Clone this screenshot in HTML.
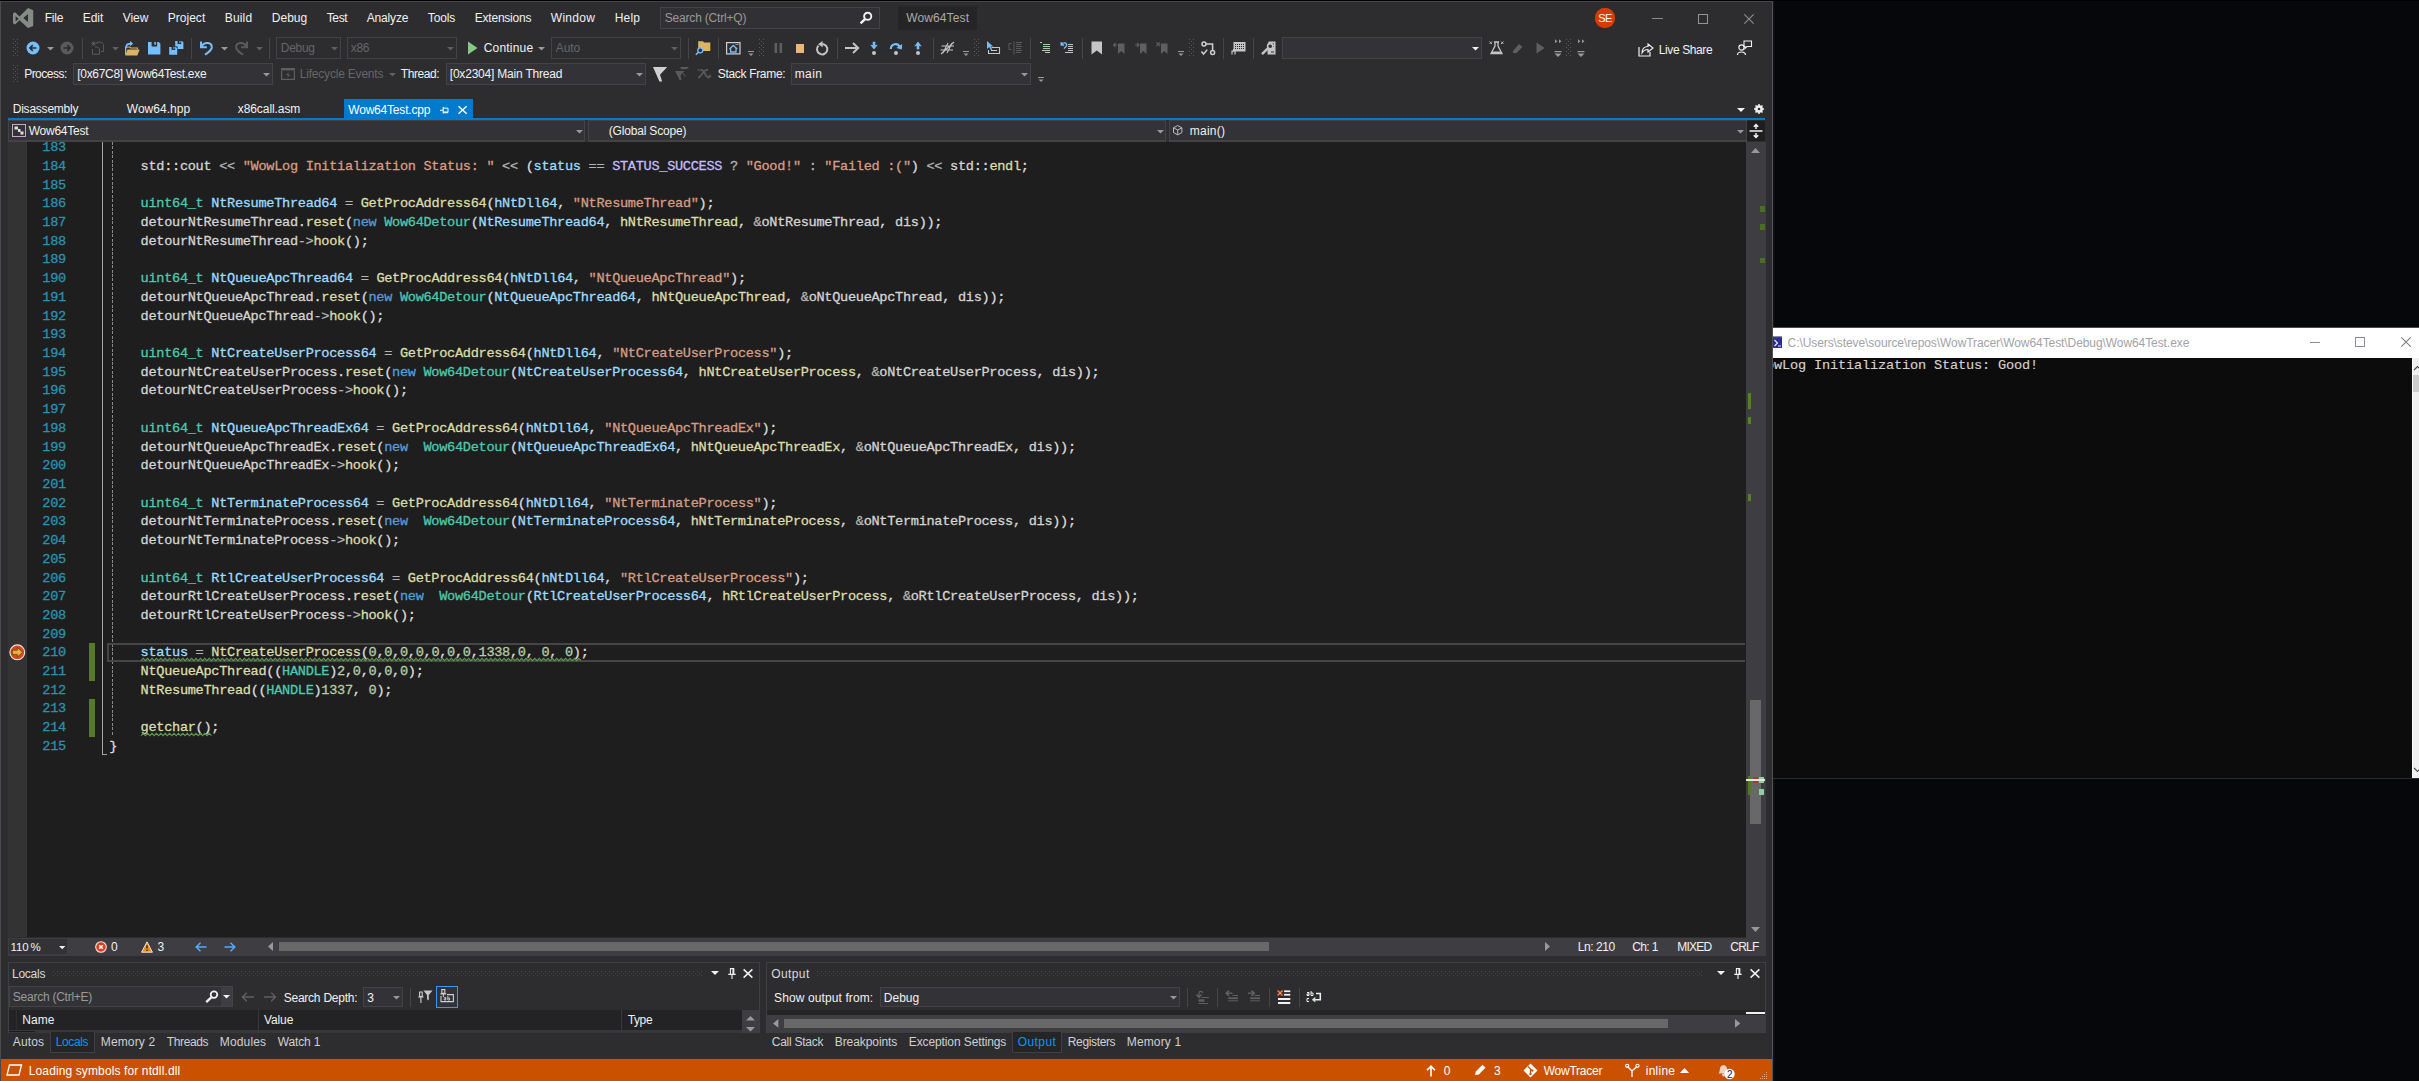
<!DOCTYPE html>
<html><head><meta charset="utf-8"><title>Wow64Test - Microsoft Visual Studio</title><style>
html,body{margin:0;padding:0;}
body{width:2419px;height:1081px;overflow:hidden;background:#06070a;position:relative;font-family:"Liberation Sans",sans-serif;}
div,span.t,svg{position:absolute;}
span.t{white-space:pre;}
svg{overflow:visible;}
.code{position:absolute;white-space:pre;font-family:"Liberation Mono",monospace;-webkit-text-stroke:0.3px;}
.code span{position:static;}
</style></head><body>
<div style="left:0px;top:1px;width:1773px;height:1080px;background:#2d2d30;"></div>
<div style="left:0px;top:1px;width:1773px;height:1px;background:#46464a;"></div>
<div style="left:0px;top:1px;width:1px;height:1080px;background:#4a4a4d;"></div>
<div style="left:1772px;top:1px;width:1px;height:1080px;background:#505054;"></div>
<div style="left:1773px;top:1px;width:2px;height:1080px;background:linear-gradient(to right,#16171a,#08090b);"></div>
<div style="left:0px;top:0px;width:2419px;height:1px;background:#000000;"></div>
<svg style="left:12.8px;top:7.9px;" width="21" height="21" viewBox="0 0 21 21"><path d="M15 0 L20.2 2.3 V17.9 L15 20.1 L6.5 12.3 L2.1 16.4 L0 15.2 V5.5 L2.1 4.3 L6.5 8.4 Z M2.6 8.2 V13.4 L5.8 10.8 Z M15 6 V13.9 L10.3 10 Z" fill="#878b85" fill-rule="evenodd"/></svg>
<span class="t" style="left:44.75px;top:10px;font-size:12px;line-height:17px;color:#f1f1f1;letter-spacing:-0.209px;">File</span>
<span class="t" style="left:82.75px;top:10px;font-size:12px;line-height:17px;color:#f1f1f1;letter-spacing:-0.044px;">Edit</span>
<span class="t" style="left:122.75px;top:10px;font-size:12px;line-height:17px;color:#f1f1f1;letter-spacing:-0.073px;">View</span>
<span class="t" style="left:167.75px;top:10px;font-size:12px;line-height:17px;color:#f1f1f1;letter-spacing:0.022px;">Project</span>
<span class="t" style="left:224.75px;top:10px;font-size:12px;line-height:17px;color:#f1f1f1;letter-spacing:0.163px;">Build</span>
<span class="t" style="left:271.75px;top:10px;font-size:12px;line-height:17px;color:#f1f1f1;letter-spacing:0.028px;">Debug</span>
<span class="t" style="left:326.75px;top:10px;font-size:12px;line-height:17px;color:#f1f1f1;letter-spacing:-0.377px;">Test</span>
<span class="t" style="left:366.75px;top:10px;font-size:12px;line-height:17px;color:#f1f1f1;letter-spacing:-0.170px;">Analyze</span>
<span class="t" style="left:427.75px;top:10px;font-size:12px;line-height:17px;color:#f1f1f1;letter-spacing:-0.103px;">Tools</span>
<span class="t" style="left:474.75px;top:10px;font-size:12px;line-height:17px;color:#f1f1f1;letter-spacing:-0.220px;">Extensions</span>
<span class="t" style="left:550.75px;top:10px;font-size:12px;line-height:17px;color:#f1f1f1;letter-spacing:0.303px;">Window</span>
<span class="t" style="left:614.75px;top:10px;font-size:12px;line-height:17px;color:#f1f1f1;letter-spacing:0.205px;">Help</span>
<div style="left:660px;top:7px;width:220px;height:22px;background:#313135;border:1px solid #434346;box-sizing:border-box;"></div>
<span class="t" style="left:664.75px;top:10px;font-size:12px;line-height:17px;color:#999999;letter-spacing:-0.190px;">Search (Ctrl+Q)</span>
<svg style="left:859px;top:10.5px;" width="14" height="14" viewBox="0 0 14 14"><circle cx="8.7" cy="5.3" r="3.6" fill="none" stroke="#f1f1f1" stroke-width="1.9"/><path d="M6.2 7.8 L1.6 12.4" stroke="#f1f1f1" stroke-width="2.4"/></svg>
<div style="left:898px;top:6px;width:79px;height:24px;background:#252527;"></div>
<span class="t" style="left:906.15px;top:10px;font-size:12px;line-height:17px;color:#aaaaaa;letter-spacing:0.133px;">Wow64Test</span>
<svg style="left:1594px;top:7px;" width="22" height="22" viewBox="0 0 22 22"><circle cx="11" cy="11" r="10.2" fill="#d83b01"/></svg>
<span class="t" style="left:1598.30px;top:11px;font-size:11px;line-height:15px;color:#ffffff;letter-spacing:-0.737px;">SE</span>
<div style="left:1652px;top:18px;width:11px;height:1px;background:#8a8a8a;"></div>
<div style="left:1698px;top:14px;width:10px;height:10px;border:1px solid #96968e;box-sizing:border-box;"></div>
<svg style="left:1744px;top:14px;" width="10" height="10" viewBox="0 0 10 10"><path d="M0.3 0.3 L9.7 9.7 M9.7 0.3 L0.3 9.7" stroke="#8f8f8f" stroke-width="1.1"/></svg>
<svg style="left:13px;top:39px;" width="6" height="18" viewBox="0 0 6 18"><g fill="#5a5a5e"><rect x="0" y="0" width="1" height="1"/><rect x="4" y="0" width="1" height="1"/><rect x="2" y="2" width="1" height="1"/><rect x="0" y="4" width="1" height="1"/><rect x="4" y="4" width="1" height="1"/><rect x="2" y="6" width="1" height="1"/><rect x="0" y="8" width="1" height="1"/><rect x="4" y="8" width="1" height="1"/><rect x="2" y="10" width="1" height="1"/><rect x="0" y="12" width="1" height="1"/><rect x="4" y="12" width="1" height="1"/><rect x="2" y="14" width="1" height="1"/><rect x="0" y="16" width="1" height="1"/><rect x="4" y="16" width="1" height="1"/></g></svg>
<svg style="left:26px;top:41px;" width="14" height="14" viewBox="0 0 14 14"><circle cx="7" cy="7" r="6.5" fill="#75beff"/><path d="M10.5 7H4.2 M6.8 4.2 L4 7 L6.8 9.8" stroke="#2d2d30" stroke-width="1.7" fill="none"/></svg>
<svg style="left:47px;top:47px;" width="7" height="3.5" viewBox="0 0 7 3.5"><path d="M0 0H7L3.5 3.5Z" fill="#999999"/></svg>
<svg style="left:60px;top:41px;" width="14" height="14" viewBox="0 0 14 14"><circle cx="7" cy="7" r="6.5" fill="#5a5a5d"/><path d="M3.5 7H9.8 M7.2 4.2 L10 7 L7.2 9.8" stroke="#2d2d30" stroke-width="1.7" fill="none"/></svg>
<div style="left:82px;top:38px;width:1px;height:21px;background:#46464a;"></div>
<svg style="left:91px;top:41px;" width="14" height="14" viewBox="0 0 14 14"><path d="M6 3V1.2H10.2L12.6 3.6V10.4H10" fill="none" stroke="#5a5a5d" stroke-width="1"/><path d="M1.5 8V13.2H8.5V8L6.6 6H4" fill="none" stroke="#5a5a5d" stroke-width="1"/><path d="M2.6 0V5.2M0 2.6H5.2M0.8 0.8L4.4 4.4M4.4 0.8L0.8 4.4" stroke="#5a5a5d" stroke-width="0.8"/></svg>
<svg style="left:112px;top:47px;" width="7" height="3.5" viewBox="0 0 7 3.5"><path d="M0 0H7L3.5 3.5Z" fill="#5f5f62"/></svg>
<svg style="left:124.6px;top:40.6px;" width="15" height="15" viewBox="0 0 15 15"><path d="M0.6 13.8 V6 H4.6 L5.6 7 H12.4 V8.2" fill="none" stroke="#dcb464" stroke-width="1.2"/><path d="M2.4 8.4H14.6L12.4 14.6H0.4Z" fill="#dcb464"/><path d="M1.4 7.2 V5 C1.4 3 3.4 2.6 6.6 2.6" fill="none" stroke="#75beff" stroke-width="1.6"/><path d="M5 0L8.2 2.6L5 5.2Z" fill="#75beff"/></svg>
<svg style="left:147.7px;top:41.7px;" width="13" height="13" viewBox="0 0 13 13"><path d="M0 0H10.6L12.4 1.8V12.4H0Z" fill="#75beff"/><rect x="3.6" y="0" width="5.5" height="4.5" fill="#2d2d30"/><rect x="6.3" y="0" width="1.6" height="2.8" fill="#75beff"/></svg>
<svg style="left:168.8px;top:41px;" width="15" height="14" viewBox="0 0 15 14"><path d="M6.2 0H13L14.4 1.4V8H6.2Z" fill="#75beff"/><rect x="8.6" y="0" width="3.6" height="3" fill="#2d2d30"/><rect x="10.4" y="0" width="1.1" height="1.9" fill="#75beff"/><path d="M-0.4 5.4H8.6V14.2H-0.4Z" fill="#2d2d30"/><path d="M0.2 5.9H6.9L8.2 7.2V13.8H0.2Z" fill="#75beff"/><rect x="2.6" y="5.9" width="3.6" height="3" fill="#2d2d30"/><rect x="4.4" y="5.9" width="1.1" height="1.9" fill="#75beff"/></svg>
<div style="left:191px;top:38px;width:1px;height:21px;background:#46464a;"></div>
<svg style="left:199.6px;top:41px;" width="13" height="14" viewBox="0 0 13 14"><path d="M1 0.4V6.2H6.8" fill="none" stroke="#75beff" stroke-width="2"/><path d="M1.6 5.6C4 0.6 12 1 11.8 6.4C11.6 9.6 8 11.4 5 13.8" fill="none" stroke="#75beff" stroke-width="2"/></svg>
<svg style="left:221px;top:47px;" width="7" height="3.5" viewBox="0 0 7 3.5"><path d="M0 0H7L3.5 3.5Z" fill="#999999"/></svg>
<svg style="left:234.6px;top:41px;" width="13" height="14" viewBox="0 0 13 14"><path d="M12 0.4V6.2H6.2" fill="none" stroke="#5a5a5d" stroke-width="2"/><path d="M11.4 5.6C9 0.6 1 1 1.2 6.4C1.4 9.6 5 11.4 8 13.8" fill="none" stroke="#5a5a5d" stroke-width="2"/></svg>
<svg style="left:256px;top:47px;" width="7" height="3.5" viewBox="0 0 7 3.5"><path d="M0 0H7L3.5 3.5Z" fill="#5f5f62"/></svg>
<div style="left:269px;top:38px;width:1px;height:21px;background:#46464a;"></div>
<div style="left:276px;top:37px;width:65px;height:22px;background:#2d2d30;border:1px solid #434346;box-sizing:border-box;"></div>
<span class="t" style="left:280.75px;top:40px;font-size:12px;line-height:17px;color:#656568;letter-spacing:-0.272px;">Debug</span>
<svg style="left:331px;top:47px;" width="7" height="3.5" viewBox="0 0 7 3.5"><path d="M0 0H7L3.5 3.5Z" fill="#5f5f62"/></svg>
<div style="left:347px;top:37px;width:110px;height:22px;background:#2d2d30;border:1px solid #434346;box-sizing:border-box;"></div>
<span class="t" style="left:350.75px;top:40px;font-size:12px;line-height:17px;color:#656568;letter-spacing:-0.283px;">x86</span>
<svg style="left:447px;top:47px;" width="7" height="3.5" viewBox="0 0 7 3.5"><path d="M0 0H7L3.5 3.5Z" fill="#5f5f62"/></svg>
<svg style="left:467px;top:41px;" width="11" height="14" viewBox="0 0 11 14"><path d="M1 0.5 L10.5 7 L1 13.5Z" fill="#86c886"/></svg>
<span class="t" style="left:483.75px;top:40px;font-size:12px;line-height:17px;color:#f1f1f1;letter-spacing:0.183px;">Continue</span>
<svg style="left:538px;top:47px;" width="7" height="3.5" viewBox="0 0 7 3.5"><path d="M0 0H7L3.5 3.5Z" fill="#999999"/></svg>
<div style="left:551px;top:37px;width:130px;height:22px;background:#2d2d30;border:1px solid #434346;box-sizing:border-box;"></div>
<span class="t" style="left:555.75px;top:40px;font-size:12px;line-height:17px;color:#656568;letter-spacing:-0.046px;">Auto</span>
<svg style="left:671px;top:47px;" width="7" height="3.5" viewBox="0 0 7 3.5"><path d="M0 0H7L3.5 3.5Z" fill="#5f5f62"/></svg>
<div style="left:688px;top:38px;width:1px;height:21px;background:#46464a;"></div>
<svg style="left:695px;top:40px;" width="16" height="16" viewBox="0 0 16 16"><path d="M3.2 1.2H8L9 2.6H15.3V11H3.2Z" fill="#dcb464"/><circle cx="5.3" cy="10.3" r="2.5" fill="#2d2d30" stroke="#75beff" stroke-width="1.3"/><path d="M3.4 12.2 L0.8 14.8" stroke="#75beff" stroke-width="1.6"/></svg>
<div style="left:718px;top:38px;width:1px;height:21px;background:#46464a;"></div>
<svg style="left:726px;top:42px;" width="15" height="13" viewBox="0 0 15 13"><rect x="0.6" y="0.6" width="13.4" height="11.3" fill="none" stroke="#d0d0d0" stroke-width="1.2"/><path d="M3.4 7 L7.3 3.4 L11.2 7 M4.6 6.4V10H10V6.4" fill="none" stroke="#75beff" stroke-width="1.3"/><rect x="9.6" y="2" width="1" height="1" fill="#d0d0d0"/><rect x="11.4" y="2" width="1" height="1" fill="#d0d0d0"/></svg>
<svg style="left:748px;top:51px;" width="7" height="6" viewBox="0 0 7 6"><rect x="0" y="0" width="6" height="1" fill="#999"/><path d="M0.5 2.5H5.5L3 5Z" fill="#999"/></svg>
<svg style="left:759px;top:39px;" width="6" height="18" viewBox="0 0 6 18"><g fill="#5a5a5e"><rect x="0" y="0" width="1" height="1"/><rect x="4" y="0" width="1" height="1"/><rect x="2" y="2" width="1" height="1"/><rect x="0" y="4" width="1" height="1"/><rect x="4" y="4" width="1" height="1"/><rect x="2" y="6" width="1" height="1"/><rect x="0" y="8" width="1" height="1"/><rect x="4" y="8" width="1" height="1"/><rect x="2" y="10" width="1" height="1"/><rect x="0" y="12" width="1" height="1"/><rect x="4" y="12" width="1" height="1"/><rect x="2" y="14" width="1" height="1"/><rect x="0" y="16" width="1" height="1"/><rect x="4" y="16" width="1" height="1"/></g></svg>
<svg style="left:774px;top:43px;" width="9" height="10" viewBox="0 0 9 10"><rect x="0.5" y="0" width="2.6" height="10" fill="#5f5f62"/><rect x="5.5" y="0" width="2.6" height="10" fill="#5f5f62"/></svg>
<div style="left:796px;top:44px;width:8.2px;height:8.5px;background:#eab67a;"></div>
<svg style="left:815px;top:41px;" width="14" height="15" viewBox="0 0 14 15"><path d="M3.4 4.6 A5.2 5.2 0 1 0 7.2 3" fill="none" stroke="#c5c5c5" stroke-width="2"/><path d="M7.6 0 L3 3.2 L7.6 6.2Z" fill="#c5c5c5"/></svg>
<div style="left:837px;top:38px;width:1px;height:21px;background:#46464a;"></div>
<svg style="left:845px;top:42px;" width="15" height="12" viewBox="0 0 15 12"><path d="M0 6H13 M8 1 L13.2 6 L8 11" fill="none" stroke="#c5c5c5" stroke-width="1.9"/></svg>
<svg style="left:870px;top:41px;" width="8" height="15" viewBox="0 0 8 15"><path d="M4 0.8V5" stroke="#75beff" stroke-width="2.6"/><path d="M0.2 3.8L4 8.6L7.8 3.8L4 4.6Z" fill="#75beff"/><circle cx="4" cy="12" r="2" fill="#c5c5c5"/></svg>
<svg style="left:889px;top:41px;" width="14" height="15" viewBox="0 0 14 15"><path d="M1.8 8 C2 2.6 8.6 1.4 10.4 5.6" fill="none" stroke="#75beff" stroke-width="2.2"/><path d="M13.2 3 L12.8 8.6 L7.4 7Z" fill="#75beff"/><circle cx="7" cy="12" r="2" fill="#c5c5c5"/></svg>
<svg style="left:914px;top:41px;" width="8" height="15" viewBox="0 0 8 15"><path d="M4 8.4V4" stroke="#75beff" stroke-width="2.6"/><path d="M0.2 5.4L4 0.6L7.8 5.4L4 4.6Z" fill="#75beff"/><circle cx="4" cy="12" r="2" fill="#c5c5c5"/></svg>
<div style="left:933px;top:38px;width:1px;height:21px;background:#46464a;"></div>
<svg style="left:940px;top:41px;" width="16" height="14" viewBox="0 0 16 14"><path d="M3 12 L8 2 M7 12 L12 2 M1.5 5H14 M0.5 9H13 M1 13 L14 1" fill="none" stroke="#c5c5c5" stroke-width="1.1"/></svg>
<svg style="left:963px;top:51px;" width="7" height="6" viewBox="0 0 7 6"><rect x="0" y="0" width="6" height="1" fill="#999"/><path d="M0.5 2.5H5.5L3 5Z" fill="#999"/></svg>
<svg style="left:974px;top:39px;" width="6" height="18" viewBox="0 0 6 18"><g fill="#5a5a5e"><rect x="0" y="0" width="1" height="1"/><rect x="4" y="0" width="1" height="1"/><rect x="2" y="2" width="1" height="1"/><rect x="0" y="4" width="1" height="1"/><rect x="4" y="4" width="1" height="1"/><rect x="2" y="6" width="1" height="1"/><rect x="0" y="8" width="1" height="1"/><rect x="4" y="8" width="1" height="1"/><rect x="2" y="10" width="1" height="1"/><rect x="0" y="12" width="1" height="1"/><rect x="4" y="12" width="1" height="1"/><rect x="2" y="14" width="1" height="1"/><rect x="0" y="16" width="1" height="1"/><rect x="4" y="16" width="1" height="1"/></g></svg>
<svg style="left:986px;top:41px;" width="15" height="14" viewBox="0 0 15 14"><path d="M1 0 L1 8 L3.2 6 L5 9.2 L6.2 8.6 L4.5 5.6 L7.2 5.4Z" fill="#75beff"/><path d="M5.5 6.5H13.5V12.5H2.5V9 M5 9.5H11" fill="none" stroke="#c5c5c5" stroke-width="1.1"/></svg>
<svg style="left:1008px;top:41px;" width="15" height="14" viewBox="0 0 15 14"><path d="M3.5 2.5H1V8.5H3.5 M6 0.5V13.5" fill="none" stroke="#5a5a5d" stroke-width="1"/><path d="M8 1.5H14 M8 3.5H13 M8 5.5H14 M8 7.5H13 M8 9.5H14 M8 11.5H13" stroke="#5a5a5d" stroke-width="1"/></svg>
<div style="left:1030px;top:38px;width:1px;height:21px;background:#46464a;"></div>
<svg style="left:1040px;top:42px;" width="11" height="11" viewBox="0 0 11 11"><path d="M0 0.5H2" stroke="#c5c5c5" stroke-width="1"/><path d="M3 2.5H10 M3 4.5H10 M3 6.5H10" stroke="#9fcf9f" stroke-width="1"/><path d="M2 8.5H10 M5 10.5H10" stroke="#c5c5c5" stroke-width="1"/></svg>
<svg style="left:1060px;top:41px;" width="15" height="14" viewBox="0 0 15 14"><path d="M8 3.5H13 M8 5.5H13 M8 7.5H13 M8 9.5H13 M5 11.5H13" stroke="#c5c5c5" stroke-width="1"/><path d="M1.2 1 V4 H4.2 M1.6 3.6 C3 1 7 1.6 6.6 4.4 C6.4 6 5 6.4 4 7.6" fill="none" stroke="#75beff" stroke-width="1.3"/></svg>
<div style="left:1082px;top:38px;width:1px;height:21px;background:#46464a;"></div>
<svg style="left:1091px;top:41px;" width="12" height="14" viewBox="0 0 12 14"><path d="M0.5 0.5H11V13.5L5.8 9.5L0.5 13.5Z" fill="#c5c5c5"/></svg>
<svg style="left:1113px;top:41px;" width="13" height="14" viewBox="0 0 13 14"><path d="M5 2.5H11.5V13L8.2 10L5 13Z" fill="#5f5f62"/><path d="M4.5 4H0.5 M2.5 2L0.5 4L2.5 6" fill="none" stroke="#5f5f62" stroke-width="1.1"/></svg>
<svg style="left:1135px;top:41px;" width="13" height="14" viewBox="0 0 13 14"><path d="M5 2.5H11.5V13L8.2 10L5 13Z" fill="#5f5f62"/><path d="M0 4H4 M2 2L4 4L2 6" fill="none" stroke="#5f5f62" stroke-width="1.1"/></svg>
<svg style="left:1156px;top:41px;" width="13" height="14" viewBox="0 0 13 14"><path d="M5 2.5H11.5V13L8.2 10L5 13Z" fill="#5f5f62"/><path d="M0.5 1.5L4 5 M4 1.5L0.5 5" fill="none" stroke="#5f5f62" stroke-width="1.1"/></svg>
<svg style="left:1178px;top:51px;" width="7" height="6" viewBox="0 0 7 6"><rect x="0" y="0" width="6" height="1" fill="#999"/><path d="M0.5 2.5H5.5L3 5Z" fill="#999"/></svg>
<svg style="left:1189px;top:39px;" width="6" height="18" viewBox="0 0 6 18"><g fill="#5a5a5e"><rect x="0" y="0" width="1" height="1"/><rect x="4" y="0" width="1" height="1"/><rect x="2" y="2" width="1" height="1"/><rect x="0" y="4" width="1" height="1"/><rect x="4" y="4" width="1" height="1"/><rect x="2" y="6" width="1" height="1"/><rect x="0" y="8" width="1" height="1"/><rect x="4" y="8" width="1" height="1"/><rect x="2" y="10" width="1" height="1"/><rect x="0" y="12" width="1" height="1"/><rect x="4" y="12" width="1" height="1"/><rect x="2" y="14" width="1" height="1"/><rect x="0" y="16" width="1" height="1"/><rect x="4" y="16" width="1" height="1"/></g></svg>
<svg style="left:1201px;top:41px;" width="15" height="15" viewBox="0 0 15 15"><circle cx="3" cy="3" r="2" fill="none" stroke="#d0d0d0" stroke-width="1.5"/><circle cx="11.6" cy="11.4" r="2" fill="none" stroke="#d0d0d0" stroke-width="1.5"/><path d="M5 3H11.6V9.4" fill="none" stroke="#d0d0d0" stroke-width="1.5"/><path d="M0.4 10.6L2.6 13L6.2 8.6" fill="none" stroke="#d0d0d0" stroke-width="1.5"/></svg>
<div style="left:1223px;top:38px;width:1px;height:21px;background:#46464a;"></div>
<svg style="left:1231px;top:41px;" width="15" height="14" viewBox="0 0 15 14"><rect x="2.5" y="1" width="12" height="9.5" fill="#c5c5c5"/><path d="M4 3.5H13 M4 5.5H13 M4 7.5H13" stroke="#2d2d30" stroke-width="1" stroke-dasharray="1 1"/><path d="M1 13.5V10.2H4V13.5 M2.5 9.4V8" stroke="#c5c5c5" stroke-width="1.2" fill="none"/></svg>
<div style="left:1253px;top:38px;width:1px;height:21px;background:#46464a;"></div>
<svg style="left:1261px;top:41px;" width="15" height="14" viewBox="0 0 15 14"><path d="M7.5 0.5H14.5V13.5H6.5V10" fill="#c5c5c5"/><path d="M9 3H13M9 5.5H13M10 11H13" stroke="#2d2d30" stroke-width="1"/><path d="M1 13.2L7.6 6.6" stroke="#c5c5c5" stroke-width="2.4"/><circle cx="9.2" cy="5.2" r="2.6" fill="#2d2d30" stroke="#c5c5c5" stroke-width="1.6"/></svg>
<div style="left:1282px;top:37px;width:200px;height:22px;background:#333337;border:1px solid #434346;box-sizing:border-box;"></div>
<svg style="left:1472px;top:47px;" width="7" height="3.5" viewBox="0 0 7 3.5"><path d="M0 0H7L3.5 3.5Z" fill="#f1f1f1"/></svg>
<svg style="left:1489px;top:41px;" width="15" height="14" viewBox="0 0 15 14"><path d="M5 1H10 M6 1V5L2 12.5H13L9 5V1" fill="none" stroke="#c5c5c5" stroke-width="1.3"/><path d="M3.5 10.5H11.5L12.5 12.5H2.5Z" fill="#c5c5c5"/><path d="M0.5 0.5L3 3M3 0.5L0.5 3 M12 0.5L14.5 3M14.5 0.5L12 3" stroke="#c5c5c5" stroke-width="0.9"/></svg>
<svg style="left:1512px;top:43px;" width="12" height="10" viewBox="0 0 12 10"><path d="M1 8 L7 1 L10.5 4 L4.5 10 H1Z" fill="#5f5f62"/></svg>
<svg style="left:1536px;top:42px;" width="9" height="12" viewBox="0 0 9 12"><path d="M0.5 0.5 L8.5 6 L0.5 11.5Z" fill="#5f5f62"/></svg>
<svg style="left:1554px;top:39px;" width="9" height="19" viewBox="0 0 9 19"><path d="M1 0.3L3.4 2.3L1 4.3Z M5 0.3L7.4 2.3L5 4.3Z" fill="#999"/><rect x="0.5" y="12" width="7" height="1.2" fill="#999"/><path d="M0.5 14.6H7.5L4 18Z" fill="#999"/></svg>
<svg style="left:1566px;top:39px;" width="6" height="18" viewBox="0 0 6 18"><g fill="#5a5a5e"><rect x="0" y="0" width="1" height="1"/><rect x="4" y="0" width="1" height="1"/><rect x="2" y="2" width="1" height="1"/><rect x="0" y="4" width="1" height="1"/><rect x="4" y="4" width="1" height="1"/><rect x="2" y="6" width="1" height="1"/><rect x="0" y="8" width="1" height="1"/><rect x="4" y="8" width="1" height="1"/><rect x="2" y="10" width="1" height="1"/><rect x="0" y="12" width="1" height="1"/><rect x="4" y="12" width="1" height="1"/><rect x="2" y="14" width="1" height="1"/><rect x="0" y="16" width="1" height="1"/><rect x="4" y="16" width="1" height="1"/></g></svg>
<svg style="left:1577px;top:39px;" width="9" height="19" viewBox="0 0 9 19"><path d="M1 0.3L3.4 2.3L1 4.3Z M5 0.3L7.4 2.3L5 4.3Z" fill="#999"/><rect x="0.5" y="12" width="7" height="1.2" fill="#999"/><path d="M0.5 14.6H7.5L4 18Z" fill="#999"/></svg>
<svg style="left:1638px;top:42px;" width="16" height="15" viewBox="0 0 16 15"><path d="M1 5V14H12V10" fill="none" stroke="#f1f1f1" stroke-width="1.2"/><path d="M4 11 C4 6 7 4.5 10 4.5 V2 L15 6 L10 10 V7.5 C7 7.5 5.5 8.5 4 11Z" fill="none" stroke="#f1f1f1" stroke-width="1.1"/></svg>
<span class="t" style="left:1658.75px;top:42px;font-size:12px;line-height:17px;color:#f1f1f1;letter-spacing:-0.387px;">Live Share</span>
<svg style="left:1737px;top:40px;" width="16" height="16" viewBox="0 0 16 16"><circle cx="4.5" cy="7.5" r="2.6" fill="none" stroke="#f1f1f1" stroke-width="1.2"/><path d="M0.5 15 C0.5 11 8.5 11 8.5 15" fill="none" stroke="#f1f1f1" stroke-width="1.2"/><path d="M7 1H14.5V6.5H10L8 8.5V6.5H7Z" fill="none" stroke="#f1f1f1" stroke-width="1.1"/></svg>
<svg style="left:13px;top:65px;" width="6" height="17" viewBox="0 0 6 17"><g fill="#5a5a5e"><rect x="0" y="0" width="1" height="1"/><rect x="4" y="0" width="1" height="1"/><rect x="2" y="2" width="1" height="1"/><rect x="0" y="4" width="1" height="1"/><rect x="4" y="4" width="1" height="1"/><rect x="2" y="6" width="1" height="1"/><rect x="0" y="8" width="1" height="1"/><rect x="4" y="8" width="1" height="1"/><rect x="2" y="10" width="1" height="1"/><rect x="0" y="12" width="1" height="1"/><rect x="4" y="12" width="1" height="1"/><rect x="2" y="14" width="1" height="1"/><rect x="0" y="16" width="1" height="1"/><rect x="4" y="16" width="1" height="1"/></g></svg>
<span class="t" style="left:24.15px;top:66px;font-size:12px;line-height:17px;color:#f1f1f1;letter-spacing:-0.510px;">Process:</span>
<div style="left:73px;top:63px;width:200px;height:22px;background:#333337;border:1px solid #434346;box-sizing:border-box;"></div>
<span class="t" style="left:77.25px;top:66px;font-size:12px;line-height:17px;color:#f1f1f1;letter-spacing:-0.311px;">[0x67C8] Wow64Test.exe</span>
<svg style="left:263px;top:73px;" width="7" height="3.5" viewBox="0 0 7 3.5"><path d="M0 0H7L3.5 3.5Z" fill="#999999"/></svg>
<svg style="left:281px;top:68px;" width="14" height="12" viewBox="0 0 14 12"><path d="M0.6 2.5V11.4H13.4V2.5" fill="none" stroke="#5f5f62" stroke-width="1.2"/><rect x="0" y="0" width="14" height="2.4" fill="#5f5f62"/><path d="M8 3.8L5 7.2H7.4L6 10.2L9.4 6.4H7Z" fill="#5f5f62"/></svg>
<span class="t" style="left:299.75px;top:66px;font-size:12px;line-height:17px;color:#656568;letter-spacing:-0.200px;">Lifecycle Events</span>
<svg style="left:389px;top:73px;" width="7" height="3.5" viewBox="0 0 7 3.5"><path d="M0 0H7L3.5 3.5Z" fill="#5f5f62"/></svg>
<span class="t" style="left:400.75px;top:66px;font-size:12px;line-height:17px;color:#f1f1f1;letter-spacing:-0.408px;">Thread:</span>
<div style="left:446px;top:63px;width:200px;height:22px;background:#333337;border:1px solid #434346;box-sizing:border-box;"></div>
<span class="t" style="left:449.75px;top:66px;font-size:12px;line-height:17px;color:#f1f1f1;letter-spacing:-0.201px;">[0x2304] Main Thread</span>
<svg style="left:636px;top:73px;" width="7" height="3.5" viewBox="0 0 7 3.5"><path d="M0 0H7L3.5 3.5Z" fill="#999999"/></svg>
<svg style="left:653px;top:66.6px;" width="15" height="15" viewBox="0 0 15 15"><path d="M0 0H14.2L7 7.8L9.2 14.6H6.4Z" fill="#d0d0d0"/></svg>
<svg style="left:675px;top:67px;" width="15" height="14" viewBox="0 0 15 14"><path d="M5 0H14L11.6 2.2H6.4Z" fill="#5a5a5d"/><path d="M0 4H9.4L5.4 8.4L6.6 13H4.6Z" fill="#5a5a5d"/><path d="M8.2 6.4L9 8L10.8 9.4" fill="none" stroke="#5a5a5d" stroke-width="1"/></svg>
<svg style="left:697px;top:68px;" width="15" height="12" viewBox="0 0 15 12"><path d="M1 9.6C3 9.6 4 7.4 5.4 5.4C6.8 3.4 8.6 1.6 11 1.6 M3.4 1.6C5.6 1.6 6.6 3 7.6 5 C8.6 7 9.6 9.6 12 9.6" fill="none" stroke="#5a5a5d" stroke-width="1.7"/><path d="M0.6 1.2L2.6 3.2 M12.8 6.6V10M11.2 8.4H14.4" stroke="#5a5a5d" stroke-width="1.1"/></svg>
<span class="t" style="left:717.75px;top:66px;font-size:12px;line-height:17px;color:#f1f1f1;letter-spacing:-0.321px;">Stack Frame:</span>
<div style="left:791px;top:63px;width:240px;height:22px;background:#333337;border:1px solid #434346;box-sizing:border-box;"></div>
<span class="t" style="left:794.75px;top:66px;font-size:12px;line-height:17px;color:#f1f1f1;letter-spacing:0.372px;">main</span>
<svg style="left:1021px;top:73px;" width="7" height="3.5" viewBox="0 0 7 3.5"><path d="M0 0H7L3.5 3.5Z" fill="#999999"/></svg>
<svg style="left:1038px;top:77px;" width="7" height="7" viewBox="0 0 7 7"><rect x="0" y="0" width="6" height="1" fill="#999"/><path d="M0.5 2.5H5.5L3 5Z" fill="#999"/></svg>
<span class="t" style="left:12.75px;top:101px;font-size:12px;line-height:17px;color:#f1f1f1;letter-spacing:-0.229px;">Disassembly</span>
<span class="t" style="left:126.75px;top:101px;font-size:12px;line-height:17px;color:#f1f1f1;letter-spacing:0.039px;">Wow64.hpp</span>
<span class="t" style="left:237.75px;top:101px;font-size:12px;line-height:17px;color:#f1f1f1;letter-spacing:-0.078px;">x86call.asm</span>
<div style="left:344px;top:99px;width:129px;height:20px;background:#007acc;"></div>
<span class="t" style="left:348.25px;top:102px;font-size:12px;line-height:17px;color:#ffffff;letter-spacing:-0.199px;">Wow64Test.cpp</span>
<svg style="left:439.8px;top:107px;" width="9" height="7" viewBox="0 0 9 7"><path d="M0 3.3H3 M3.2 0V6.6 M3.2 1.2H8V5H3.2 M3.2 5.7H8.3" fill="none" stroke="#ffffff" stroke-width="1"/></svg>
<svg style="left:458.4px;top:106.3px;" width="9.2" height="8" viewBox="0 0 9.2 8"><path d="M0.5 0.3L8.7 7.7M8.7 0.3L0.5 7.7" stroke="#ffffff" stroke-width="1.4"/></svg>
<svg style="left:1737px;top:108px;" width="8" height="4.0" viewBox="0 0 8 4.0"><path d="M0 0H8L4.0 4.0Z" fill="#f1f1f1"/></svg>
<svg style="left:1754px;top:103.5px;" width="10" height="10" viewBox="0 0 10 10"><circle cx="5" cy="5" r="2.9" fill="none" stroke="#f1f1f1" stroke-width="1.9"/><path d="M5 0V10M0 5H10M1.5 1.5L8.5 8.5M8.5 1.5L1.5 8.5" stroke="#f1f1f1" stroke-width="1.5"/><circle cx="5" cy="5" r="1.3" fill="#2d2d30"/></svg>
<div style="left:8px;top:118px;width:1757px;height:2px;background:#007acc;"></div>
<div style="left:8px;top:120px;width:1739px;height:22px;background:#434346;"></div>
<div style="left:9px;top:121px;width:575px;height:19px;background:#333337;"></div>
<div style="left:585px;top:120px;width:3px;height:22px;background:#2f2f32;"></div>
<div style="left:589px;top:121px;width:576px;height:19px;background:#333337;"></div>
<div style="left:1166px;top:120px;width:3px;height:22px;background:#2f2f32;"></div>
<div style="left:1170px;top:121px;width:576px;height:19px;background:#333337;"></div>
<svg style="left:12px;top:124px;" width="14" height="13" viewBox="0 0 14 13"><rect x="0.5" y="0.5" width="13" height="12" fill="none" stroke="#c8a6c8" stroke-width="1"/><path d="M2.5 2.5H6V5H8.5V7.5H11.5V10.5H8.5V8H6V5.5H2.5Z M4 1.5V6 " fill="#e0e0e0"/></svg>
<span class="t" style="left:28.75px;top:123px;font-size:12px;line-height:17px;color:#f1f1f1;letter-spacing:-0.256px;">Wow64Test</span>
<svg style="left:576px;top:130px;" width="7" height="3.5" viewBox="0 0 7 3.5"><path d="M0 0H7L3.5 3.5Z" fill="#999999"/></svg>
<span class="t" style="left:608.75px;top:123px;font-size:12px;line-height:17px;color:#f1f1f1;letter-spacing:-0.181px;">(Global Scope)</span>
<svg style="left:1157px;top:130px;" width="7" height="3.5" viewBox="0 0 7 3.5"><path d="M0 0H7L3.5 3.5Z" fill="#999999"/></svg>
<svg style="left:1173px;top:124.8px;" width="9.4" height="10.4" viewBox="0 0 11 12"><path d="M5.5 0.6 L10.4 3.2 V8.8 L5.5 11.4 L0.6 8.8 V3.2 Z M0.6 3.2 L5.5 5.8 L10.4 3.2 M5.5 5.8 V11.4" fill="none" stroke="#c5c5c5" stroke-width="1.1"/></svg>
<span class="t" style="left:1189.75px;top:123px;font-size:12px;line-height:17px;color:#f1f1f1;letter-spacing:0.250px;">main()</span>
<svg style="left:1736.5px;top:130px;" width="7" height="3.5" viewBox="0 0 7 3.5"><path d="M0 0H7L3.5 3.5Z" fill="#999999"/></svg>
<div style="left:1747px;top:121px;width:18px;height:20px;background:#1e1e1e;"></div>
<svg style="left:1749px;top:124px;" width="14" height="14" viewBox="0 0 14 14"><path d="M0.5 7H13.5 M7 0.5V5 M7 9V13.5 M4.8 2.8 L7 0.5 L9.2 2.8 M4.8 11.2 L7 13.5 L9.2 11.2" fill="none" stroke="#f1f1f1" stroke-width="1.5"/></svg>
<div style="left:8px;top:142px;width:19px;height:795px;background:#333333;"></div>
<div style="left:27px;top:142px;width:1719px;height:795px;background:#1e1e1e;"></div>
<div style="left:102px;top:142px;width:1px;height:613px;background:#a5a5a5;"></div>
<div style="left:102px;top:754px;width:5px;height:1px;background:#a5a5a5;"></div>
<div style="left:112px;top:142px;width:1px;height:594px;background:repeating-linear-gradient(to bottom,#8a8a8a 0,#8a8a8a 3px,transparent 3px,transparent 4.4px);"></div>
<div style="left:89px;top:643px;width:6px;height:37.5px;background:#577a2c;"></div>
<div style="left:89px;top:699px;width:6px;height:38px;background:#577a2c;"></div>
<div style="left:107px;top:643px;width:1638px;height:18.5px;border:1px solid #464646;box-sizing:border-box;border-width:2px;border-right:none;"></div>
<svg style="left:9px;top:643.5px;" width="17" height="17" viewBox="0 0 17 17"><circle cx="8.3" cy="8.3" r="7.4" fill="#d8481c" stroke="#f4e6e0" stroke-width="1.1"/><path d="M3.4 6.2H8.3V3.4L13.6 8.3L8.3 13.2V10.4H3.4Z" fill="#e8b040" stroke="#6a4210" stroke-width="0.8"/></svg>
<div class="code" style="left:42.3px;top:138px;font-size:13.6px;line-height:19px;letter-spacing:-0.299px;color:#2b91af;">183</div>
<div class="code" style="left:42.3px;top:157px;font-size:13.6px;line-height:19px;letter-spacing:-0.299px;color:#2b91af;">184</div>
<div class="code" style="left:140.6px;top:157px;font-size:13.6px;line-height:19px;letter-spacing:-0.299px;color:#dcdcdc;"><span style="color:#d4d4d4">std</span><span style="color:#dcdcdc">::</span><span style="color:#d4d4d4">cout</span><span style="color:#dcdcdc"> </span><span style="color:#b4b4b4">&lt;&lt;</span><span style="color:#dcdcdc"> </span><span style="color:#d69d85">&quot;WowLog Initialization Status: &quot;</span><span style="color:#dcdcdc"> </span><span style="color:#b4b4b4">&lt;&lt;</span><span style="color:#dcdcdc"> (</span><span style="color:#9cdcfe">status</span><span style="color:#dcdcdc"> </span><span style="color:#b4b4b4">==</span><span style="color:#dcdcdc"> </span><span style="color:#c3bdf7">STATUS_SUCCESS</span><span style="color:#dcdcdc"> </span><span style="color:#b4b4b4">?</span><span style="color:#dcdcdc"> </span><span style="color:#d69d85">&quot;Good!&quot;</span><span style="color:#dcdcdc"> </span><span style="color:#b4b4b4">:</span><span style="color:#dcdcdc"> </span><span style="color:#d69d85">&quot;Failed :(&quot;</span><span style="color:#dcdcdc">) </span><span style="color:#b4b4b4">&lt;&lt;</span><span style="color:#dcdcdc"> </span><span style="color:#d4d4d4">std</span><span style="color:#dcdcdc">::</span><span style="color:#dcdcaa">endl</span><span style="color:#dcdcdc">;</span></div>
<div class="code" style="left:42.3px;top:176px;font-size:13.6px;line-height:19px;letter-spacing:-0.299px;color:#2b91af;">185</div>
<div class="code" style="left:42.3px;top:194px;font-size:13.6px;line-height:19px;letter-spacing:-0.299px;color:#2b91af;">186</div>
<div class="code" style="left:140.6px;top:194px;font-size:13.6px;line-height:19px;letter-spacing:-0.299px;color:#dcdcdc;"><span style="color:#4ec9b0">uint64_t</span><span style="color:#dcdcdc"> </span><span style="color:#9cdcfe">NtResumeThread64</span><span style="color:#b4b4b4"> = </span><span style="color:#dcdcaa">GetProcAddress64</span><span style="color:#dcdcdc">(</span><span style="color:#9cdcfe">hNtDll64</span><span style="color:#dcdcdc">, </span><span style="color:#d69d85">&quot;NtResumeThread&quot;</span><span style="color:#dcdcdc">);</span></div>
<div class="code" style="left:42.3px;top:213px;font-size:13.6px;line-height:19px;letter-spacing:-0.299px;color:#2b91af;">187</div>
<div class="code" style="left:140.6px;top:213px;font-size:13.6px;line-height:19px;letter-spacing:-0.299px;color:#dcdcdc;"><span style="color:#d4d4d4">detourNtResumeThread</span><span style="color:#dcdcdc">.</span><span style="color:#dcdcaa">reset</span><span style="color:#dcdcdc">(</span><span style="color:#569cd6">new</span><span style="color:#dcdcdc"> </span><span style="color:#4ec9b0">Wow64Detour</span><span style="color:#dcdcdc">(</span><span style="color:#9cdcfe">NtResumeThread64</span><span style="color:#dcdcdc">, </span><span style="color:#dcdcaa">hNtResumeThread</span><span style="color:#dcdcdc">, </span><span style="color:#b4b4b4">&amp;</span><span style="color:#d4d4d4">oNtResumeThread</span><span style="color:#dcdcdc">, </span><span style="color:#d4d4d4">dis</span><span style="color:#dcdcdc">));</span></div>
<div class="code" style="left:42.3px;top:232px;font-size:13.6px;line-height:19px;letter-spacing:-0.299px;color:#2b91af;">188</div>
<div class="code" style="left:140.6px;top:232px;font-size:13.6px;line-height:19px;letter-spacing:-0.299px;color:#dcdcdc;"><span style="color:#d4d4d4">detourNtResumeThread</span><span style="color:#b4b4b4">-&gt;</span><span style="color:#dcdcaa">hook</span><span style="color:#dcdcdc">();</span></div>
<div class="code" style="left:42.3px;top:250px;font-size:13.6px;line-height:19px;letter-spacing:-0.299px;color:#2b91af;">189</div>
<div class="code" style="left:42.3px;top:269px;font-size:13.6px;line-height:19px;letter-spacing:-0.299px;color:#2b91af;">190</div>
<div class="code" style="left:140.6px;top:269px;font-size:13.6px;line-height:19px;letter-spacing:-0.299px;color:#dcdcdc;"><span style="color:#4ec9b0">uint64_t</span><span style="color:#dcdcdc"> </span><span style="color:#9cdcfe">NtQueueApcThread64</span><span style="color:#b4b4b4"> = </span><span style="color:#dcdcaa">GetProcAddress64</span><span style="color:#dcdcdc">(</span><span style="color:#9cdcfe">hNtDll64</span><span style="color:#dcdcdc">, </span><span style="color:#d69d85">&quot;NtQueueApcThread&quot;</span><span style="color:#dcdcdc">);</span></div>
<div class="code" style="left:42.3px;top:288px;font-size:13.6px;line-height:19px;letter-spacing:-0.299px;color:#2b91af;">191</div>
<div class="code" style="left:140.6px;top:288px;font-size:13.6px;line-height:19px;letter-spacing:-0.299px;color:#dcdcdc;"><span style="color:#d4d4d4">detourNtQueueApcThread</span><span style="color:#dcdcdc">.</span><span style="color:#dcdcaa">reset</span><span style="color:#dcdcdc">(</span><span style="color:#569cd6">new</span><span style="color:#dcdcdc"> </span><span style="color:#4ec9b0">Wow64Detour</span><span style="color:#dcdcdc">(</span><span style="color:#9cdcfe">NtQueueApcThread64</span><span style="color:#dcdcdc">, </span><span style="color:#dcdcaa">hNtQueueApcThread</span><span style="color:#dcdcdc">, </span><span style="color:#b4b4b4">&amp;</span><span style="color:#d4d4d4">oNtQueueApcThread</span><span style="color:#dcdcdc">, </span><span style="color:#d4d4d4">dis</span><span style="color:#dcdcdc">));</span></div>
<div class="code" style="left:42.3px;top:307px;font-size:13.6px;line-height:19px;letter-spacing:-0.299px;color:#2b91af;">192</div>
<div class="code" style="left:140.6px;top:307px;font-size:13.6px;line-height:19px;letter-spacing:-0.299px;color:#dcdcdc;"><span style="color:#d4d4d4">detourNtQueueApcThread</span><span style="color:#b4b4b4">-&gt;</span><span style="color:#dcdcaa">hook</span><span style="color:#dcdcdc">();</span></div>
<div class="code" style="left:42.3px;top:325px;font-size:13.6px;line-height:19px;letter-spacing:-0.299px;color:#2b91af;">193</div>
<div class="code" style="left:42.3px;top:344px;font-size:13.6px;line-height:19px;letter-spacing:-0.299px;color:#2b91af;">194</div>
<div class="code" style="left:140.6px;top:344px;font-size:13.6px;line-height:19px;letter-spacing:-0.299px;color:#dcdcdc;"><span style="color:#4ec9b0">uint64_t</span><span style="color:#dcdcdc"> </span><span style="color:#9cdcfe">NtCreateUserProcess64</span><span style="color:#b4b4b4"> = </span><span style="color:#dcdcaa">GetProcAddress64</span><span style="color:#dcdcdc">(</span><span style="color:#9cdcfe">hNtDll64</span><span style="color:#dcdcdc">, </span><span style="color:#d69d85">&quot;NtCreateUserProcess&quot;</span><span style="color:#dcdcdc">);</span></div>
<div class="code" style="left:42.3px;top:363px;font-size:13.6px;line-height:19px;letter-spacing:-0.299px;color:#2b91af;">195</div>
<div class="code" style="left:140.6px;top:363px;font-size:13.6px;line-height:19px;letter-spacing:-0.299px;color:#dcdcdc;"><span style="color:#d4d4d4">detourNtCreateUserProcess</span><span style="color:#dcdcdc">.</span><span style="color:#dcdcaa">reset</span><span style="color:#dcdcdc">(</span><span style="color:#569cd6">new</span><span style="color:#dcdcdc"> </span><span style="color:#4ec9b0">Wow64Detour</span><span style="color:#dcdcdc">(</span><span style="color:#9cdcfe">NtCreateUserProcess64</span><span style="color:#dcdcdc">, </span><span style="color:#dcdcaa">hNtCreateUserProcess</span><span style="color:#dcdcdc">, </span><span style="color:#b4b4b4">&amp;</span><span style="color:#d4d4d4">oNtCreateUserProcess</span><span style="color:#dcdcdc">, </span><span style="color:#d4d4d4">dis</span><span style="color:#dcdcdc">));</span></div>
<div class="code" style="left:42.3px;top:381px;font-size:13.6px;line-height:19px;letter-spacing:-0.299px;color:#2b91af;">196</div>
<div class="code" style="left:140.6px;top:381px;font-size:13.6px;line-height:19px;letter-spacing:-0.299px;color:#dcdcdc;"><span style="color:#d4d4d4">detourNtCreateUserProcess</span><span style="color:#b4b4b4">-&gt;</span><span style="color:#dcdcaa">hook</span><span style="color:#dcdcdc">();</span></div>
<div class="code" style="left:42.3px;top:400px;font-size:13.6px;line-height:19px;letter-spacing:-0.299px;color:#2b91af;">197</div>
<div class="code" style="left:42.3px;top:419px;font-size:13.6px;line-height:19px;letter-spacing:-0.299px;color:#2b91af;">198</div>
<div class="code" style="left:140.6px;top:419px;font-size:13.6px;line-height:19px;letter-spacing:-0.299px;color:#dcdcdc;"><span style="color:#4ec9b0">uint64_t</span><span style="color:#dcdcdc"> </span><span style="color:#9cdcfe">NtQueueApcThreadEx64</span><span style="color:#b4b4b4"> = </span><span style="color:#dcdcaa">GetProcAddress64</span><span style="color:#dcdcdc">(</span><span style="color:#9cdcfe">hNtDll64</span><span style="color:#dcdcdc">, </span><span style="color:#d69d85">&quot;NtQueueApcThreadEx&quot;</span><span style="color:#dcdcdc">);</span></div>
<div class="code" style="left:42.3px;top:438px;font-size:13.6px;line-height:19px;letter-spacing:-0.299px;color:#2b91af;">199</div>
<div class="code" style="left:140.6px;top:438px;font-size:13.6px;line-height:19px;letter-spacing:-0.299px;color:#dcdcdc;"><span style="color:#d4d4d4">detourNtQueueApcThreadEx</span><span style="color:#dcdcdc">.</span><span style="color:#dcdcaa">reset</span><span style="color:#dcdcdc">(</span><span style="color:#569cd6">new</span><span style="color:#dcdcdc">  </span><span style="color:#4ec9b0">Wow64Detour</span><span style="color:#dcdcdc">(</span><span style="color:#9cdcfe">NtQueueApcThreadEx64</span><span style="color:#dcdcdc">, </span><span style="color:#dcdcaa">hNtQueueApcThreadEx</span><span style="color:#dcdcdc">, </span><span style="color:#b4b4b4">&amp;</span><span style="color:#d4d4d4">oNtQueueApcThreadEx</span><span style="color:#dcdcdc">, </span><span style="color:#d4d4d4">dis</span><span style="color:#dcdcdc">));</span></div>
<div class="code" style="left:42.3px;top:456px;font-size:13.6px;line-height:19px;letter-spacing:-0.299px;color:#2b91af;">200</div>
<div class="code" style="left:140.6px;top:456px;font-size:13.6px;line-height:19px;letter-spacing:-0.299px;color:#dcdcdc;"><span style="color:#d4d4d4">detourNtQueueApcThreadEx</span><span style="color:#b4b4b4">-&gt;</span><span style="color:#dcdcaa">hook</span><span style="color:#dcdcdc">();</span></div>
<div class="code" style="left:42.3px;top:475px;font-size:13.6px;line-height:19px;letter-spacing:-0.299px;color:#2b91af;">201</div>
<div class="code" style="left:42.3px;top:494px;font-size:13.6px;line-height:19px;letter-spacing:-0.299px;color:#2b91af;">202</div>
<div class="code" style="left:140.6px;top:494px;font-size:13.6px;line-height:19px;letter-spacing:-0.299px;color:#dcdcdc;"><span style="color:#4ec9b0">uint64_t</span><span style="color:#dcdcdc"> </span><span style="color:#9cdcfe">NtTerminateProcess64</span><span style="color:#b4b4b4"> = </span><span style="color:#dcdcaa">GetProcAddress64</span><span style="color:#dcdcdc">(</span><span style="color:#9cdcfe">hNtDll64</span><span style="color:#dcdcdc">, </span><span style="color:#d69d85">&quot;NtTerminateProcess&quot;</span><span style="color:#dcdcdc">);</span></div>
<div class="code" style="left:42.3px;top:512px;font-size:13.6px;line-height:19px;letter-spacing:-0.299px;color:#2b91af;">203</div>
<div class="code" style="left:140.6px;top:512px;font-size:13.6px;line-height:19px;letter-spacing:-0.299px;color:#dcdcdc;"><span style="color:#d4d4d4">detourNtTerminateProcess</span><span style="color:#dcdcdc">.</span><span style="color:#dcdcaa">reset</span><span style="color:#dcdcdc">(</span><span style="color:#569cd6">new</span><span style="color:#dcdcdc">  </span><span style="color:#4ec9b0">Wow64Detour</span><span style="color:#dcdcdc">(</span><span style="color:#9cdcfe">NtTerminateProcess64</span><span style="color:#dcdcdc">, </span><span style="color:#dcdcaa">hNtTerminateProcess</span><span style="color:#dcdcdc">, </span><span style="color:#b4b4b4">&amp;</span><span style="color:#d4d4d4">oNtTerminateProcess</span><span style="color:#dcdcdc">, </span><span style="color:#d4d4d4">dis</span><span style="color:#dcdcdc">));</span></div>
<div class="code" style="left:42.3px;top:531px;font-size:13.6px;line-height:19px;letter-spacing:-0.299px;color:#2b91af;">204</div>
<div class="code" style="left:140.6px;top:531px;font-size:13.6px;line-height:19px;letter-spacing:-0.299px;color:#dcdcdc;"><span style="color:#d4d4d4">detourNtTerminateProcess</span><span style="color:#b4b4b4">-&gt;</span><span style="color:#dcdcaa">hook</span><span style="color:#dcdcdc">();</span></div>
<div class="code" style="left:42.3px;top:550px;font-size:13.6px;line-height:19px;letter-spacing:-0.299px;color:#2b91af;">205</div>
<div class="code" style="left:42.3px;top:569px;font-size:13.6px;line-height:19px;letter-spacing:-0.299px;color:#2b91af;">206</div>
<div class="code" style="left:140.6px;top:569px;font-size:13.6px;line-height:19px;letter-spacing:-0.299px;color:#dcdcdc;"><span style="color:#4ec9b0">uint64_t</span><span style="color:#dcdcdc"> </span><span style="color:#9cdcfe">RtlCreateUserProcess64</span><span style="color:#b4b4b4"> = </span><span style="color:#dcdcaa">GetProcAddress64</span><span style="color:#dcdcdc">(</span><span style="color:#9cdcfe">hNtDll64</span><span style="color:#dcdcdc">, </span><span style="color:#d69d85">&quot;RtlCreateUserProcess&quot;</span><span style="color:#dcdcdc">);</span></div>
<div class="code" style="left:42.3px;top:587px;font-size:13.6px;line-height:19px;letter-spacing:-0.299px;color:#2b91af;">207</div>
<div class="code" style="left:140.6px;top:587px;font-size:13.6px;line-height:19px;letter-spacing:-0.299px;color:#dcdcdc;"><span style="color:#d4d4d4">detourRtlCreateUserProcess</span><span style="color:#dcdcdc">.</span><span style="color:#dcdcaa">reset</span><span style="color:#dcdcdc">(</span><span style="color:#569cd6">new</span><span style="color:#dcdcdc">  </span><span style="color:#4ec9b0">Wow64Detour</span><span style="color:#dcdcdc">(</span><span style="color:#9cdcfe">RtlCreateUserProcess64</span><span style="color:#dcdcdc">, </span><span style="color:#dcdcaa">hRtlCreateUserProcess</span><span style="color:#dcdcdc">, </span><span style="color:#b4b4b4">&amp;</span><span style="color:#d4d4d4">oRtlCreateUserProcess</span><span style="color:#dcdcdc">, </span><span style="color:#d4d4d4">dis</span><span style="color:#dcdcdc">));</span></div>
<div class="code" style="left:42.3px;top:606px;font-size:13.6px;line-height:19px;letter-spacing:-0.299px;color:#2b91af;">208</div>
<div class="code" style="left:140.6px;top:606px;font-size:13.6px;line-height:19px;letter-spacing:-0.299px;color:#dcdcdc;"><span style="color:#d4d4d4">detourRtlCreateUserProcess</span><span style="color:#b4b4b4">-&gt;</span><span style="color:#dcdcaa">hook</span><span style="color:#dcdcdc">();</span></div>
<div class="code" style="left:42.3px;top:625px;font-size:13.6px;line-height:19px;letter-spacing:-0.299px;color:#2b91af;">209</div>
<div class="code" style="left:42.3px;top:643px;font-size:13.6px;line-height:19px;letter-spacing:-0.299px;color:#2b91af;">210</div>
<div class="code" style="left:140.6px;top:643px;font-size:13.6px;line-height:19px;letter-spacing:-0.299px;color:#dcdcdc;"><span style="color:#9cdcfe">status</span><span style="color:#dcdcdc"> </span><span style="color:#b4b4b4">=</span><span style="color:#dcdcdc"> </span><span style="color:#dcdcaa">NtCreateUserProcess</span><span style="color:#dcdcdc">(</span><span style="color:#b5cea8">0</span><span style="color:#dcdcdc">,</span><span style="color:#b5cea8">0</span><span style="color:#dcdcdc">,</span><span style="color:#b5cea8">0</span><span style="color:#dcdcdc">,</span><span style="color:#b5cea8">0</span><span style="color:#dcdcdc">,</span><span style="color:#b5cea8">0</span><span style="color:#dcdcdc">,</span><span style="color:#b5cea8">0</span><span style="color:#dcdcdc">,</span><span style="color:#b5cea8">0</span><span style="color:#dcdcdc">,</span><span style="color:#b5cea8">1338</span><span style="color:#dcdcdc">,</span><span style="color:#b5cea8">0</span><span style="color:#dcdcdc">, </span><span style="color:#b5cea8">0</span><span style="color:#dcdcdc">, </span><span style="color:#b5cea8">0</span><span style="color:#dcdcdc">);</span></div>
<div class="code" style="left:42.3px;top:662px;font-size:13.6px;line-height:19px;letter-spacing:-0.299px;color:#2b91af;">211</div>
<div class="code" style="left:140.6px;top:662px;font-size:13.6px;line-height:19px;letter-spacing:-0.299px;color:#dcdcdc;"><span style="color:#dcdcaa">NtQueueApcThread</span><span style="color:#dcdcdc">((</span><span style="color:#4ec9b0">HANDLE</span><span style="color:#dcdcdc">)</span><span style="color:#b5cea8">2</span><span style="color:#dcdcdc">,</span><span style="color:#b5cea8">0</span><span style="color:#dcdcdc">,</span><span style="color:#b5cea8">0</span><span style="color:#dcdcdc">,</span><span style="color:#b5cea8">0</span><span style="color:#dcdcdc">,</span><span style="color:#b5cea8">0</span><span style="color:#dcdcdc">);</span></div>
<div class="code" style="left:42.3px;top:681px;font-size:13.6px;line-height:19px;letter-spacing:-0.299px;color:#2b91af;">212</div>
<div class="code" style="left:140.6px;top:681px;font-size:13.6px;line-height:19px;letter-spacing:-0.299px;color:#dcdcdc;"><span style="color:#dcdcaa">NtResumeThread</span><span style="color:#dcdcdc">((</span><span style="color:#4ec9b0">HANDLE</span><span style="color:#dcdcdc">)</span><span style="color:#b5cea8">1337</span><span style="color:#dcdcdc">, </span><span style="color:#b5cea8">0</span><span style="color:#dcdcdc">);</span></div>
<div class="code" style="left:42.3px;top:699px;font-size:13.6px;line-height:19px;letter-spacing:-0.299px;color:#2b91af;">213</div>
<div class="code" style="left:42.3px;top:718px;font-size:13.6px;line-height:19px;letter-spacing:-0.299px;color:#2b91af;">214</div>
<div class="code" style="left:140.6px;top:718px;font-size:13.6px;line-height:19px;letter-spacing:-0.299px;color:#dcdcdc;"><span style="color:#dcdcaa">getchar</span><span style="color:#dcdcdc">();</span></div>
<div class="code" style="left:42.3px;top:737px;font-size:13.6px;line-height:19px;letter-spacing:-0.299px;color:#2b91af;">215</div>
<div class="code" style="left:109.2px;top:737px;font-size:13.6px;line-height:19px;color:#dcdcdc;">}</div>
<svg style="left:141px;top:658.2px;" width="438" height="4" viewBox="0 0 438 4"><path d="M0 2.6 L2.2 0.4 L4.4 2.6 L6.6 0.4 L8.8 2.6 L11.0 0.4 L13.2 2.6 L15.4 0.4 L17.6 2.6 L19.8 0.4 L22.0 2.6 L24.2 0.4 L26.4 2.6 L28.6 0.4 L30.8 2.6 L33.0 0.4 L35.2 2.6 L37.4 0.4 L39.6 2.6 L41.8 0.4 L44.0 2.6 L46.2 0.4 L48.4 2.6 L50.6 0.4 L52.8 2.6 L55.0 0.4 L57.2 2.6 L59.4 0.4 L61.6 2.6 L63.8 0.4 L66.0 2.6 L68.2 0.4 L70.4 2.6 L72.6 0.4 L74.8 2.6 L77.0 0.4 L79.2 2.6 L81.4 0.4 L83.6 2.6 L85.8 0.4 L88.0 2.6 L90.2 0.4 L92.4 2.6 L94.6 0.4 L96.8 2.6 L99.0 0.4 L101.2 2.6 L103.4 0.4 L105.6 2.6 L107.8 0.4 L110.0 2.6 L112.2 0.4 L114.4 2.6 L116.6 0.4 L118.8 2.6 L121.0 0.4 L123.2 2.6 L125.4 0.4 L127.6 2.6 L129.8 0.4 L132.0 2.6 L134.2 0.4 L136.4 2.6 L138.6 0.4 L140.8 2.6 L143.0 0.4 L145.2 2.6 L147.4 0.4 L149.6 2.6 L151.8 0.4 L154.0 2.6 L156.2 0.4 L158.4 2.6 L160.6 0.4 L162.8 2.6 L165.0 0.4 L167.2 2.6 L169.4 0.4 L171.6 2.6 L173.8 0.4 L176.0 2.6 L178.2 0.4 L180.4 2.6 L182.6 0.4 L184.8 2.6 L187.0 0.4 L189.2 2.6 L191.4 0.4 L193.6 2.6 L195.8 0.4 L198.0 2.6 L200.2 0.4 L202.4 2.6 L204.6 0.4 L206.8 2.6 L209.0 0.4 L211.2 2.6 L213.4 0.4 L215.6 2.6 L217.8 0.4 L220.0 2.6 L222.2 0.4 L224.4 2.6 L226.6 0.4 L228.8 2.6 L231.0 0.4 L233.2 2.6 L235.4 0.4 L237.6 2.6 L239.8 0.4 L242.0 2.6 L244.2 0.4 L246.4 2.6 L248.6 0.4 L250.8 2.6 L253.0 0.4 L255.2 2.6 L257.4 0.4 L259.6 2.6 L261.8 0.4 L264.0 2.6 L266.2 0.4 L268.4 2.6 L270.6 0.4 L272.8 2.6 L275.0 0.4 L277.2 2.6 L279.4 0.4 L281.6 2.6 L283.8 0.4 L286.0 2.6 L288.2 0.4 L290.4 2.6 L292.6 0.4 L294.8 2.6 L297.0 0.4 L299.2 2.6 L301.4 0.4 L303.6 2.6 L305.8 0.4 L308.0 2.6 L310.2 0.4 L312.4 2.6 L314.6 0.4 L316.8 2.6 L319.0 0.4 L321.2 2.6 L323.4 0.4 L325.6 2.6 L327.8 0.4 L330.0 2.6 L332.2 0.4 L334.4 2.6 L336.6 0.4 L338.8 2.6 L341.0 0.4 L343.2 2.6 L345.4 0.4 L347.6 2.6 L349.8 0.4 L352.0 2.6 L354.2 0.4 L356.4 2.6 L358.6 0.4 L360.8 2.6 L363.0 0.4 L365.2 2.6 L367.4 0.4 L369.6 2.6 L371.8 0.4 L374.0 2.6 L376.2 0.4 L378.4 2.6 L380.6 0.4 L382.8 2.6 L385.0 0.4 L387.2 2.6 L389.4 0.4 L391.6 2.6 L393.8 0.4 L396.0 2.6 L398.2 0.4 L400.4 2.6 L402.6 0.4 L404.8 2.6 L407.0 0.4 L409.2 2.6 L411.4 0.4 L413.6 2.6 L415.8 0.4 L418.0 2.6 L420.2 0.4 L422.4 2.6 L424.6 0.4 L426.8 2.6 L429.0 0.4 L431.2 2.6 L433.4 0.4 L435.6 2.6 L437.8 0.4 L440.0 2.6" fill="none" stroke="#5f9a50" stroke-width="1.1"/></svg>
<svg style="left:141px;top:733.2px;" width="70" height="4" viewBox="0 0 70 4"><path d="M0 2.6 L2.2 0.4 L4.4 2.6 L6.6 0.4 L8.8 2.6 L11.0 0.4 L13.2 2.6 L15.4 0.4 L17.6 2.6 L19.8 0.4 L22.0 2.6 L24.2 0.4 L26.4 2.6 L28.6 0.4 L30.8 2.6 L33.0 0.4 L35.2 2.6 L37.4 0.4 L39.6 2.6 L41.8 0.4 L44.0 2.6 L46.2 0.4 L48.4 2.6 L50.6 0.4 L52.8 2.6 L55.0 0.4 L57.2 2.6 L59.4 0.4 L61.6 2.6 L63.8 0.4 L66.0 2.6 L68.2 0.4 L70.4 2.6" fill="none" stroke="#5f9a50" stroke-width="1.1"/></svg>
<div style="left:1746px;top:142px;width:20px;height:796px;background:#3e3e42;"></div>
<svg style="left:1751px;top:148px;" width="9" height="5" viewBox="0 0 9 5"><path d="M0 5H9L4.5 0Z" fill="#999999"/></svg>
<svg style="left:1751px;top:927px;" width="9" height="5" viewBox="0 0 9 5"><path d="M0 0H9L4.5 5Z" fill="#999999"/></svg>
<div style="left:1750px;top:700px;width:11px;height:124px;background:#686868;"></div>
<div style="left:1759.5px;top:206.3px;width:5.2px;height:5.6px;background:#4a6e22;"></div>
<div style="left:1759.5px;top:224.2px;width:5.2px;height:5.6px;background:#4a6e22;"></div>
<div style="left:1759.5px;top:257.5px;width:5.2px;height:5.6px;background:#4a6e22;"></div>
<div style="left:1748px;top:393px;width:3.2px;height:15.8px;background:#56802a;"></div>
<div style="left:1748px;top:417.2px;width:3.2px;height:6.8px;background:#56802a;"></div>
<div style="left:1748px;top:494px;width:3.2px;height:7.2px;background:#56802a;"></div>
<div style="left:1748px;top:776.3px;width:3.4px;height:18.5px;background:#4f7a28;"></div>
<div style="left:1753px;top:777px;width:5.2px;height:6px;background:#a04020;"></div>
<div style="left:1759.3px;top:777px;width:4.8px;height:6px;background:#8fcfa0;"></div>
<div style="left:1759.3px;top:789px;width:4.8px;height:6.3px;background:#8fcfa0;"></div>
<div style="left:1746px;top:779px;width:19px;height:2.2px;background:#e4e4e4;"></div>
<div style="left:8px;top:938px;width:1758px;height:18px;background:#3e3e42;"></div>
<div style="left:9px;top:939px;width:58px;height:15px;background:#333337;"></div>
<span class="t" style="left:10.55px;top:939px;font-size:11.5px;line-height:16px;color:#f1f1f1;letter-spacing:-0.171px;word-spacing:-1px;">110 %</span>
<svg style="left:58.8px;top:946px;" width="6.4" height="3.2" viewBox="0 0 6.4 3.2"><path d="M0 0H6.4L3.2 3.2Z" fill="#f1f1f1"/></svg>
<svg style="left:95px;top:941px;" width="12" height="12" viewBox="0 0 12 12"><circle cx="6" cy="6" r="5.3" fill="#e03a1e" stroke="#f8e4dc" stroke-width="1.1"/><path d="M4.2 4.2L7.8 7.8M7.8 4.2L4.2 7.8" stroke="#fff" stroke-width="1.5"/></svg>
<span class="t" style="left:110.95px;top:939px;font-size:12px;line-height:17px;color:#f1f1f1;">0</span>
<svg style="left:141px;top:941px;" width="12" height="12" viewBox="0 0 12 12"><path d="M6 0.9L11.4 11.2H0.6Z" fill="#f08a1c" stroke="#f8e6c8" stroke-width="1"/><path d="M6 4.2V7.6M6 8.8V10" stroke="#2d2d30" stroke-width="1.4"/></svg>
<span class="t" style="left:157.45px;top:939px;font-size:12px;line-height:17px;color:#f1f1f1;">3</span>
<svg style="left:195px;top:942px;" width="12" height="10" viewBox="0 0 12 10"><path d="M11.5 5H1.5 M5.5 0.7L1.2 5L5.5 9.3" fill="none" stroke="#55aaff" stroke-width="1.5"/></svg>
<svg style="left:224px;top:942px;" width="12" height="10" viewBox="0 0 12 10"><path d="M0.5 5H10.5 M6.5 0.7L10.8 5L6.5 9.3" fill="none" stroke="#55aaff" stroke-width="1.5"/></svg>
<svg style="left:268px;top:942px;" width="5" height="9" viewBox="0 0 5 9"><path d="M5 0V9L0 4.5Z" fill="#999999"/></svg>
<div style="left:279px;top:942px;width:990px;height:9px;background:#686868;"></div>
<svg style="left:1545px;top:942px;" width="5" height="9" viewBox="0 0 5 9"><path d="M0 0V9L5 4.5Z" fill="#999999"/></svg>
<span class="t" style="left:1577.75px;top:939px;font-size:12px;line-height:17px;color:#f1f1f1;letter-spacing:-0.448px;">Ln: 210</span>
<span class="t" style="left:1632.25px;top:939px;font-size:12px;line-height:17px;color:#f1f1f1;letter-spacing:-0.636px;">Ch: 1</span>
<span class="t" style="left:1677.25px;top:939px;font-size:12px;line-height:17px;color:#f1f1f1;letter-spacing:-0.800px;">MIXED</span>
<span class="t" style="left:1730.35px;top:939px;font-size:12px;line-height:17px;color:#f1f1f1;letter-spacing:-0.800px;">CRLF</span>
<div style="left:8px;top:962px;width:752px;height:71px;background:#2d2d30;border:1px solid #3f3f46;box-sizing:border-box;"></div>
<span class="t" style="left:11.95px;top:966px;font-size:12px;line-height:17px;color:#d8d8d8;letter-spacing:-0.231px;">Locals</span>
<svg style="left:53px;top:971px" width="650" height="5"><defs><pattern id="dp53" width="4" height="4" patternUnits="userSpaceOnUse"><rect x="0" y="0" width="1" height="1" fill="#46464a"/><rect x="2" y="2" width="1" height="1" fill="#46464a"/></pattern></defs><rect width="650" height="5" fill="url(#dp53)"/></svg>
<svg style="left:711px;top:971px;" width="8" height="4.0" viewBox="0 0 8 4.0"><path d="M0 0H8L4.0 4.0Z" fill="#f1f1f1"/></svg>
<svg style="left:728px;top:968px;" width="8" height="11" viewBox="0 0 8 11"><path d="M2 0.6H6.2 M2.4 0.6V6 M5 0.6V6 M5.8 0.6V6 M0.3 6.4H7.7 M4 6.4V11" fill="none" stroke="#f1f1f1" stroke-width="1.1"/></svg>
<svg style="left:743px;top:969px;" width="10" height="9" viewBox="0 0 10 9"><path d="M0.6 0.4L9.4 8.6M9.4 0.4L0.6 8.6" stroke="#f1f1f1" stroke-width="1.5"/></svg>
<div style="left:9px;top:986px;width:224px;height:21px;background:#333337;border:1px solid #434346;box-sizing:border-box;"></div>
<div style="left:221px;top:987px;width:11px;height:19px;background:#3e3e42;"></div>
<span class="t" style="left:12.85px;top:989px;font-size:12px;line-height:17px;color:#999999;letter-spacing:-0.255px;">Search (Ctrl+E)</span>
<svg style="left:205px;top:990px;" width="14" height="13" viewBox="0 0 14 13"><circle cx="9" cy="4.6" r="3.3" fill="none" stroke="#f1f1f1" stroke-width="1.8"/><path d="M6.6 7.2 L1.2 12.2" stroke="#f1f1f1" stroke-width="2.3"/></svg>
<svg style="left:223px;top:995px;" width="7" height="3.5" viewBox="0 0 7 3.5"><path d="M0 0H7L3.5 3.5Z" fill="#f1f1f1"/></svg>
<svg style="left:241px;top:992px;" width="14" height="10" viewBox="0 0 14 10"><path d="M13 5H1.5 M5.8 0.7L1.4 5L5.8 9.3" fill="none" stroke="#5f5f62" stroke-width="1.4"/></svg>
<svg style="left:263px;top:992px;" width="14" height="10" viewBox="0 0 14 10"><path d="M1 5H12.5 M8.2 0.7L12.6 5L8.2 9.3" fill="none" stroke="#5f5f62" stroke-width="1.4"/></svg>
<span class="t" style="left:283.75px;top:990px;font-size:12px;line-height:17px;color:#f1f1f1;letter-spacing:-0.247px;">Search Depth:</span>
<div style="left:363px;top:987px;width:40px;height:20px;background:#333337;border:1px solid #434346;box-sizing:border-box;"></div>
<span class="t" style="left:367.25px;top:990px;font-size:12px;line-height:17px;color:#f1f1f1;">3</span>
<svg style="left:393px;top:996px;" width="7" height="3.5" viewBox="0 0 7 3.5"><path d="M0 0H7L3.5 3.5Z" fill="#999999"/></svg>
<div style="left:410px;top:988px;width:1px;height:19px;background:#46464a;"></div>
<svg style="left:418px;top:990px;" width="15" height="15" viewBox="0 0 15 15"><path d="M5.4 0.5H14.6L10.8 5V10.5L9 9.2V5Z" fill="#c5c5c5"/><path d="M1.6 2H4.2V6.5H1.6Z M0.2 7H5.6 M2.9 7V13" fill="none" stroke="#d0d0d0" stroke-width="1.1"/></svg>
<div style="left:436px;top:986px;width:22px;height:22px;background:#333337;border:1px solid #3399ff;box-sizing:border-box;"></div>
<svg style="left:440px;top:989px;" width="15" height="15" viewBox="0 0 15 15"><path d="M1.8 0.6H4.8V4.4H1.8Z M0.4 4.9H6.2 M3.3 5V8" fill="none" stroke="#d0d0d0" stroke-width="1.1"/><path d="M1 7V12.6H13.4V5.6H7" fill="none" stroke="#d0d0d0" stroke-width="1.1"/><path d="M4.2 8.5H5.8V11H4.2V9.8H5.8 M7.8 7V11H9.6V9H7.8" fill="none" stroke="#d0d0d0" stroke-width="0.9"/></svg>
<div style="left:9px;top:1010px;width:733px;height:19.5px;background:#232325;"></div>
<div style="left:9px;top:1029.5px;width:733px;height:3px;background:#38383c;"></div>
<div style="left:9px;top:1031px;width:26px;height:1px;background:#1b1b1c;"></div>
<div style="left:16px;top:1010px;width:1px;height:19.5px;background:#2d2d30;"></div>
<span class="t" style="left:22.25px;top:1012px;font-size:12px;line-height:17px;color:#f1f1f1;letter-spacing:0.072px;">Name</span>
<div style="left:258px;top:1010px;width:1px;height:20px;background:#38383c;"></div>
<span class="t" style="left:263.95px;top:1012px;font-size:12px;line-height:17px;color:#f1f1f1;letter-spacing:-0.100px;">Value</span>
<div style="left:621px;top:1010px;width:1px;height:20px;background:#38383c;"></div>
<span class="t" style="left:627.65px;top:1012px;font-size:12px;line-height:17px;color:#f1f1f1;letter-spacing:-0.354px;">Type</span>
<div style="left:742px;top:1010px;width:17px;height:22.5px;background:#3e3e42;"></div>
<svg style="left:746px;top:1016.4px;" width="9" height="4.5" viewBox="0 0 9 4.5"><path d="M0 4.5H9L4.5 0Z" fill="#999"/></svg>
<svg style="left:746px;top:1027.2px;" width="9" height="4.5" viewBox="0 0 9 4.5"><path d="M0 0H9L4.5 4.5Z" fill="#999"/></svg>
<span class="t" style="left:12.75px;top:1034px;font-size:12px;line-height:17px;color:#d0d0d0;letter-spacing:0.163px;">Autos</span>
<div style="left:50px;top:1032px;width:45px;height:21px;background:#252526;border:1px solid #3f3f46;box-sizing:border-box;border-top:none;"></div>
<span class="t" style="left:55.75px;top:1034px;font-size:12px;line-height:17px;color:#0097fb;letter-spacing:-0.365px;">Locals</span>
<span class="t" style="left:100.75px;top:1034px;font-size:12px;line-height:17px;color:#d0d0d0;letter-spacing:0.144px;">Memory 2</span>
<span class="t" style="left:166.75px;top:1034px;font-size:12px;line-height:17px;color:#d0d0d0;letter-spacing:-0.360px;">Threads</span>
<span class="t" style="left:219.75px;top:1034px;font-size:12px;line-height:17px;color:#d0d0d0;letter-spacing:0.163px;">Modules</span>
<span class="t" style="left:277.75px;top:1034px;font-size:12px;line-height:17px;color:#d0d0d0;letter-spacing:-0.153px;">Watch 1</span>
<div style="left:766px;top:962px;width:1000px;height:71px;background:#2d2d30;border:1px solid #3f3f46;box-sizing:border-box;"></div>
<span class="t" style="left:771.25px;top:966px;font-size:12px;line-height:17px;color:#d8d8d8;letter-spacing:0.396px;">Output</span>
<svg style="left:817px;top:971px" width="886" height="5"><defs><pattern id="dp817" width="4" height="4" patternUnits="userSpaceOnUse"><rect x="0" y="0" width="1" height="1" fill="#46464a"/><rect x="2" y="2" width="1" height="1" fill="#46464a"/></pattern></defs><rect width="886" height="5" fill="url(#dp817)"/></svg>
<svg style="left:1717px;top:971px;" width="8" height="4.0" viewBox="0 0 8 4.0"><path d="M0 0H8L4.0 4.0Z" fill="#f1f1f1"/></svg>
<svg style="left:1734px;top:968px;" width="8" height="11" viewBox="0 0 8 11"><path d="M2 0.6H6.2 M2.4 0.6V6 M5 0.6V6 M5.8 0.6V6 M0.3 6.4H7.7 M4 6.4V11" fill="none" stroke="#f1f1f1" stroke-width="1.1"/></svg>
<svg style="left:1750px;top:969px;" width="10" height="9" viewBox="0 0 10 9"><path d="M0.6 0.4L9.4 8.6M9.4 0.4L0.6 8.6" stroke="#f1f1f1" stroke-width="1.5"/></svg>
<span class="t" style="left:774.05px;top:990px;font-size:12px;line-height:17px;color:#f1f1f1;letter-spacing:0.107px;">Show output from:</span>
<div style="left:880px;top:987px;width:300px;height:20px;background:#333337;border:1px solid #434346;box-sizing:border-box;"></div>
<span class="t" style="left:883.75px;top:990px;font-size:12px;line-height:17px;color:#f1f1f1;letter-spacing:0.028px;">Debug</span>
<svg style="left:1170px;top:996px;" width="7" height="3.5" viewBox="0 0 7 3.5"><path d="M0 0H7L3.5 3.5Z" fill="#999999"/></svg>
<div style="left:1187px;top:988px;width:1px;height:19px;background:#46464a;"></div>
<svg style="left:1195px;top:990px;" width="15" height="15" viewBox="0 0 15 15"><path d="M1.5 4.5L4 7.5L6.5 4.5 M4 7V3.2C4 0.8 7.5 0.8 7.5 3.2" fill="none" stroke="#5f5f62" stroke-width="1.3"/><path d="M6.5 7.5H14 M3.5 13.5H13" stroke="#5f5f62" stroke-width="1"/><rect x="3.5" y="9.3" width="6" height="2.4" fill="#5f5f62"/></svg>
<div style="left:1217px;top:988px;width:1px;height:19px;background:#46464a;"></div>
<svg style="left:1225px;top:990px;" width="14" height="14" viewBox="0 0 14 14"><path d="M7.5 3.2H1.5 M4 0.6L1.2 3.2L4 5.8" fill="none" stroke="#5f5f62" stroke-width="1.6"/><path d="M7.5 5.5H13" stroke="#5f5f62" stroke-width="1"/><rect x="3.2" y="7.3" width="9.8" height="1.8" fill="#5f5f62"/><path d="M3.2 10.8H13" stroke="#5f5f62" stroke-width="1"/></svg>
<svg style="left:1247px;top:990px;" width="14" height="14" viewBox="0 0 14 14"><path d="M1 3.2H7 M4.5 0.6L7.3 3.2L4.5 5.8" fill="none" stroke="#5f5f62" stroke-width="1.6"/><path d="M7.5 5.5H13" stroke="#5f5f62" stroke-width="1"/><rect x="3.2" y="7.3" width="9.8" height="1.8" fill="#5f5f62"/><path d="M3.2 10.8H13" stroke="#5f5f62" stroke-width="1"/></svg>
<div style="left:1269px;top:988px;width:1px;height:19px;background:#46464a;"></div>
<svg style="left:1277px;top:990px;" width="14" height="14" viewBox="0 0 14 14"><path d="M0.6 0.4L5.6 5.6M5.6 0.4L0.6 5.6" stroke="#e8583a" stroke-width="1.7"/><path d="M1.6 1.4L4.6 4.6M4.6 1.4L1.6 4.6" stroke="#f0c060" stroke-width="0.6"/><rect x="7" y="0.4" width="6.3" height="1.7" fill="#f1f1f1"/><rect x="7" y="3.9" width="6.3" height="1.7" fill="#f1f1f1"/><rect x="1" y="8" width="12.3" height="2" fill="#f1f1f1"/><rect x="1" y="12" width="12.3" height="2" fill="#f1f1f1"/></svg>
<div style="left:1299px;top:988px;width:1px;height:19px;background:#46464a;"></div>
<svg style="left:1306px;top:991px;" width="16" height="13" viewBox="0 0 16 13"><path d="M1 1.5H3V4.5H1V3H3 M5 0V4.5H7V2H5 M3 7.5H1V10.5H3" fill="none" stroke="#f1f1f1" stroke-width="1"/><path d="M10 2.5H14.3V8.7H8" fill="none" stroke="#f1f1f1" stroke-width="1.5"/><path d="M5.8 8.7L9.3 5.8V11.6Z" fill="#cfe6cf"/></svg>
<div style="left:767px;top:1010px;width:998px;height:5px;background:#252526;"></div>
<div style="left:767px;top:1015px;width:999px;height:18px;background:#3e3e42;"></div>
<div style="left:1746px;top:1012px;width:19px;height:2.4px;background:#f0f0f0;"></div>
<svg style="left:773px;top:1019.4px;" width="5.4" height="8.8" viewBox="0 0 5.4 8.8"><path d="M5.4 0V8.8L0 4.4Z" fill="#999"/></svg>
<div style="left:784px;top:1019.3px;width:884px;height:9px;background:#686868;"></div>
<svg style="left:1735px;top:1019.4px;" width="5.4" height="8.8" viewBox="0 0 5.4 8.8"><path d="M0 0V8.8L5.4 4.4Z" fill="#999"/></svg>
<span class="t" style="left:771.75px;top:1034px;font-size:12px;line-height:17px;color:#d0d0d0;letter-spacing:-0.252px;">Call Stack</span>
<span class="t" style="left:834.75px;top:1034px;font-size:12px;line-height:17px;color:#d0d0d0;letter-spacing:-0.079px;">Breakpoints</span>
<span class="t" style="left:908.75px;top:1034px;font-size:12px;line-height:17px;color:#d0d0d0;letter-spacing:-0.105px;">Exception Settings</span>
<div style="left:1012px;top:1032px;width:50px;height:21px;background:#252526;border:1px solid #3f3f46;box-sizing:border-box;border-top:none;"></div>
<span class="t" style="left:1017.75px;top:1034px;font-size:12px;line-height:17px;color:#0097fb;letter-spacing:0.413px;">Output</span>
<span class="t" style="left:1067.75px;top:1034px;font-size:12px;line-height:17px;color:#d0d0d0;letter-spacing:-0.354px;">Registers</span>
<span class="t" style="left:1126.75px;top:1034px;font-size:12px;line-height:17px;color:#d0d0d0;letter-spacing:0.144px;">Memory 1</span>
<div style="left:1px;top:1059px;width:1771px;height:22px;background:#ca5100;"></div>
<svg style="left:6px;top:1064px;" width="17" height="12" viewBox="0 0 17 12"><path d="M3.5 1H15.5L13 11H1Z" fill="none" stroke="#ffffff" stroke-width="1.3"/></svg>
<span class="t" style="left:28.75px;top:1063px;font-size:12px;line-height:17px;color:#ffffff;letter-spacing:0.118px;">Loading symbols for ntdll.dll</span>
<svg style="left:1425.5px;top:1065px;" width="10" height="12" viewBox="0 0 10 12"><path d="M5 11.5V1.5 M1 5.2L5 1.2L9 5.2" fill="none" stroke="#ffffff" stroke-width="1.6"/></svg>
<span class="t" style="left:1443.75px;top:1063px;font-size:12px;line-height:17px;color:#ffffff;">0</span>
<svg style="left:1474px;top:1064px;" width="13" height="12" viewBox="0 0 13 12"><path d="M1 11 L1.8 7.5 L8.5 0.8 L11.5 3.8 L4.8 10.4 Z" fill="#ffffff"/></svg>
<span class="t" style="left:1493.95px;top:1063px;font-size:12px;line-height:17px;color:#ffffff;">3</span>
<svg style="left:1523px;top:1063px;" width="15" height="15" viewBox="0 0 15 15"><path d="M7.5 0.5L14.5 7.5L7.5 14.5L0.5 7.5Z" fill="#ffffff"/><path d="M5 3.5 L9 7.5 M7.5 6 V11" stroke="#ca5100" stroke-width="1.2"/><circle cx="9.3" cy="7.6" r="1.2" fill="#ca5100"/><circle cx="7.5" cy="11" r="1.2" fill="#ca5100"/></svg>
<span class="t" style="left:1543.75px;top:1063px;font-size:12px;line-height:17px;color:#ffffff;letter-spacing:-0.242px;">WowTracer</span>
<svg style="left:1625px;top:1063px;" width="15" height="15" viewBox="0 0 15 15"><path d="M2.5 3.5 L7 8 V14 M7 8 L12 3.5" fill="none" stroke="#ffffff" stroke-width="1.3"/><circle cx="2.2" cy="2.8" r="1.6" fill="none" stroke="#fff" stroke-width="1.1"/><circle cx="12.5" cy="2.8" r="1.6" fill="none" stroke="#fff" stroke-width="1.1"/></svg>
<span class="t" style="left:1645.75px;top:1063px;font-size:12px;line-height:17px;color:#ffffff;letter-spacing:0.247px;">inline</span>
<svg style="left:1680px;top:1068px;" width="9" height="5" viewBox="0 0 9 5"><path d="M0 5H9L4.5 0Z" fill="#ffffff"/></svg>
<svg style="left:1716px;top:1063px;" width="22" height="18" viewBox="0 0 22 18"><path d="M2.5 10.5 C4 9 3.5 6 4.5 4 C5.5 1.5 9.5 1.5 10.5 4 C11.5 6 11 9 12.5 10.5Z" fill="#f0d0c0"/><circle cx="7.5" cy="12" r="1.4" fill="#f0d0c0"/><circle cx="13.5" cy="11" r="5.2" fill="#ffffff"/></svg>
<span class="t" style="left:1726.95px;top:1068px;font-size:10px;line-height:14px;color:#101840;">2</span>
<svg style="left:1760px;top:1072px;" width="8" height="8" viewBox="0 0 8 8"><g fill="#e8a070"><rect x="6" y="0" width="1" height="1"/><rect x="4" y="2" width="1" height="1"/><rect x="6" y="2" width="1" height="1"/><rect x="2" y="4" width="1" height="1"/><rect x="4" y="4" width="1" height="1"/><rect x="6" y="4" width="1" height="1"/><rect x="0" y="6" width="1" height="1"/><rect x="2" y="6" width="1" height="1"/><rect x="4" y="6" width="1" height="1"/><rect x="6" y="6" width="1" height="1"/></g></svg>
<div style="left:1773px;top:327px;width:646px;height:451px;background:#0c0c0c;"></div>
<div style="left:1773px;top:327px;width:646px;height:1px;background:#4a4a4a;"></div>
<div style="left:1773px;top:328px;width:646px;height:30px;background:#ffffff;"></div>
<svg style="left:1773px;top:336px;" width="9" height="12" viewBox="0 0 9 12"><rect x="0" y="0" width="9" height="12" fill="#2c2c8a"/><rect x="0" y="0" width="9" height="1.2" fill="#8a8aa0"/><path d="M1.5 4L4.5 7L1.5 10 M5 10H8" fill="none" stroke="#e8e8f0" stroke-width="1.2"/></svg>
<span class="t" style="left:1787.55px;top:335px;font-size:12px;line-height:17px;color:#a2a2a8;letter-spacing:-0.080px;">C:\Users\steve\source\repos\WowTracer\Wow64Test\Debug\Wow64Test.exe</span>
<div style="left:2310px;top:342px;width:10px;height:1px;background:#8a8d99;"></div>
<div style="left:2355px;top:337px;width:10px;height:10px;border:1px solid #8a8d99;box-sizing:border-box;"></div>
<svg style="left:2401px;top:337px;" width="10" height="10" viewBox="0 0 10 10"><path d="M0.3 0.3L9.7 9.7M9.7 0.3L0.3 9.7" stroke="#7a7d88" stroke-width="1.1"/></svg>
<div style="left:1773px;top:358px;width:639px;height:30px;overflow:hidden;"><div class="code" style="left:-15px;top:-2px;font-size:13.6px;line-height:19px;letter-spacing:-0.161px;color:#d2d2d2;-webkit-text-stroke:0.15px;">WowLog Initialization Status: Good!</div></div>
<div style="left:2412px;top:358px;width:7px;height:420px;background:#f0f0f0;"></div>
<div style="left:2412px;top:358px;width:1px;height:420px;background:#ffffff;"></div>
<div style="left:2413px;top:375px;width:6px;height:17px;background:#cdcdcd;"></div>
<svg style="left:2414px;top:366px;" width="5" height="4" viewBox="0 0 5 4"><path d="M0 4L3.5 0.5L7 4" fill="none" stroke="#505050" stroke-width="1.2"/></svg>
<svg style="left:2414px;top:768px;" width="5" height="4" viewBox="0 0 5 4"><path d="M0 0L3.5 3.5L7 0" fill="none" stroke="#505050" stroke-width="1.2"/></svg>
<div style="left:1773px;top:778px;width:646px;height:1px;background:#2b2b2b;"></div>
</body></html>
